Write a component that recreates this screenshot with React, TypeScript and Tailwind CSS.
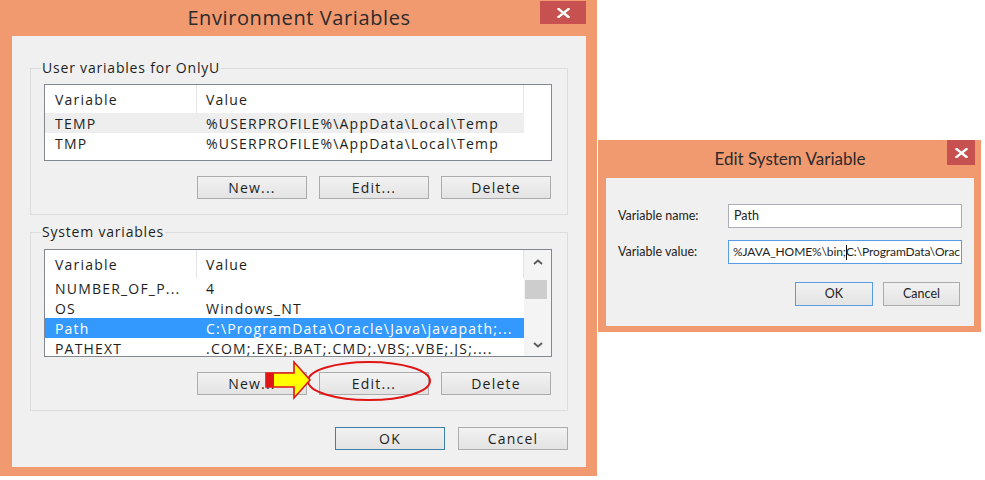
import type { ReactNode } from "react";

const MAIN_FONT = "font-['Open_Sans',sans-serif] text-[14px] tracking-[1.2px] text-[#1e1e1e]";
const SMALL_FONT = "font-['Lato',sans-serif] text-[12.5px] text-[#1e1e1e]";

function CloseButton({ className }: { className: string }) {
  return (
    <div className={`bg-[#c75050] flex items-center justify-center ${className}`}>
      <svg width="13" height="10" viewBox="0 0 13 10">
        <path d="M1.5 1 L11.5 9 M11.5 1 L1.5 9" stroke="#ffffff" strokeWidth="2.4" strokeLinecap="square" />
      </svg>
    </div>
  );
}

function WinButton({ children, className }: { children: ReactNode; className: string }) {
  return (
    <div
      className={`h-[23px] flex items-center justify-center border bg-gradient-to-b from-[#f2f2f2] to-[#e3e3e3] ${className}`}
    >
      {children}
    </div>
  );
}

function Chevron({ up }: { up?: boolean }) {
  return (
    <svg width="10" height="6" viewBox="0 0 10 6">
      <path d={up ? "M1 5 L5 1.5 L9 5" : "M1 1 L5 4.5 L9 1"} stroke="#5a5a5a" strokeWidth="1.8" fill="none" />
    </svg>
  );
}

type Row = { name: string; value: string; state?: "hover" | "selected" };

function ListView({ rows, scroll, height }: { rows: Row[]; scroll?: boolean; height: string }) {
  return (
    <div className={`border border-[#828790] bg-white flex overflow-hidden ${height}`}>
      <div className="w-[479px] shrink-0">
        <div className="h-[28px] flex">
          <div className="w-[152px] pl-[10px] flex items-center border-r border-[#e5e5e5]">Variable</div>
          <div className="flex-1 pl-[9px] flex items-center border-r border-[#e5e5e5]">Value</div>
        </div>
        {rows.map((r) => (
          <div
            key={r.name}
            className={`h-[20px] flex items-center whitespace-nowrap ${
              r.state === "selected"
                ? "bg-[#3399ff] text-white"
                : r.state === "hover"
                  ? "bg-[#eeeeee]"
                  : ""
            }`}
          >
            <div className="w-[152px] pl-[10px]">{r.name}</div>
            <div className="flex-1 pl-[9px]">{r.value}</div>
          </div>
        ))}
      </div>
      {scroll ? (
        <div className="flex-1 bg-[#f4f4f4] flex flex-col">
          <div className="h-[24px] flex items-center justify-center">
            <Chevron up />
          </div>
          <div className="mt-[6px] ml-[1px] w-[22px] h-[19px] bg-[#cdcdcd]" />
          <div className="flex-1" />
          <div className="h-[22px] flex items-center justify-center">
            <Chevron />
          </div>
        </div>
      ) : (
        <div className="flex-1" />
      )}
    </div>
  );
}

function ButtonRow() {
  return (
    <div className="mt-[15px] mr-[1px] flex justify-end gap-[12px]">
      <WinButton className="w-[110px] border-[#acacac]">New...</WinButton>
      <WinButton className="w-[110px] border-[#acacac]">Edit...</WinButton>
      <WinButton className="w-[110px] border-[#acacac]">Delete</WinButton>
    </div>
  );
}

function Group({ label, children, className }: { label: string; children: ReactNode; className: string }) {
  return (
    <div className={`mx-[18px] border border-[#dcdcdc] pl-[13px] pr-[15px] pb-[15px] ${className}`}>
      <div className="-mt-[10px] -ml-[3px] w-fit px-[1px] bg-[#f0f0f0] leading-[18px] tracking-[0.8px]">{label}</div>
      {children}
    </div>
  );
}

function EnvironmentVariables() {
  const userRows: Row[] = [
    { name: "TEMP", value: "%USERPROFILE%\\AppData\\Local\\Temp", state: "hover" },
    { name: "TMP", value: "%USERPROFILE%\\AppData\\Local\\Temp" },
  ];
  const systemRows: Row[] = [
    { name: "NUMBER_OF_P...", value: "4" },
    { name: "OS", value: "Windows_NT" },
    { name: "Path", value: "C:\\ProgramData\\Oracle\\Java\\javapath;...", state: "selected" },
    { name: "PATHEXT", value: ".COM;.EXE;.BAT;.CMD;.VBS;.VBE;.JS;...." },
  ];

  return (
    <div className="w-[597px] h-[476px] shrink-0 bg-[#f1996f] pl-[12px] pr-[11px] flex flex-col">
      <div className="h-[36px] grid grid-cols-[46px_1fr_46px]">
        <div />
        <div className="flex items-center justify-center pb-[1px] font-['Open_Sans',sans-serif] text-[20px] tracking-[0.6px] text-[#2b2b2b]">
          Environment Variables
        </div>
        <div className="pt-[1px]">
          <CloseButton className="h-[23px]" />
        </div>
      </div>
      <div className={`relative h-[431px] bg-[#f0f0f0] flex flex-col ${MAIN_FONT}`}>
        <Group label="User variables for OnlyU" className="mt-[32px]">
          <div className="mt-[7px]">
            <ListView rows={userRows} height="h-[77px]" />
          </div>
          <ButtonRow />
        </Group>
        <Group label="System variables" className="mt-[17px]">
          <div className="mt-[8px]">
            <ListView rows={systemRows} scroll height="h-[108px]" />
          </div>
          <div className="mt-[1px]">
            <ButtonRow />
          </div>
        </Group>
        <div className="mt-[16px] mr-[18px] flex justify-end gap-[13px]">
          <WinButton className="w-[110px] border-[#3c7fb1] from-[#eef4fa] to-[#e1ebf5]">OK</WinButton>
          <WinButton className="w-[110px] border-[#acacac]">Cancel</WinButton>
        </div>

        {/* annotation drawn over the Edit... button */}
        <svg
          className="absolute left-[250px] top-[322px] pointer-events-none"
          width="172"
          height="46"
          viewBox="0 0 172 46"
        >
          <ellipse cx="107" cy="23" rx="61" ry="19" fill="none" stroke="#e01515" strokeWidth="2" />
          <polygon
            points="4,15 32,15 32,4 48,22 32,40 32,29 4,29"
            fill="#ffff00"
            stroke="#e01515"
            strokeWidth="1.6"
            strokeLinejoin="miter"
          />
          <rect x="4" y="15" width="8" height="14" fill="#e01515" />
        </svg>
      </div>
    </div>
  );
}

function EditSystemVariable() {
  return (
    <div className="mt-[140px] ml-[1px] w-[383px] h-[192px] shrink-0 bg-[#f1996f] pl-[8px] pr-[7px] flex flex-col">
      <div className="h-[38px] grid grid-cols-[27px_1fr_27px]">
        <div />
        <div className="flex items-center justify-center font-['Lato',sans-serif] text-[17px] text-[#2b2b2b]">
          Edit System Variable
        </div>
        <div className="-mr-[1px]">
          <CloseButton className="h-[25px]" />
        </div>
      </div>
      <div className={`h-[148px] bg-[#f0f0f0] px-[12px] pt-[26px] ${SMALL_FONT}`}>
        <div className="flex items-center">
          <div className="w-[110px]">Variable name:</div>
          <div className="flex-1 h-[24px] border border-[#abadb3] bg-white pl-[5px] flex items-center">Path</div>
        </div>
        <div className="mt-[12px] flex items-center">
          <div className="w-[110px]">Variable value:</div>
          <div className="flex-1 h-[24px] border border-[#569de5] bg-white pl-[4px] flex items-center whitespace-nowrap overflow-hidden text-[12px] tracking-[-0.1px]">
            %JAVA_HOME%\bin;
            <span className="inline-block w-px h-[15px] bg-black -mr-[1px]" />
            C:\ProgramData\Orac
          </div>
        </div>
        <div className="mt-[18px] mr-[2px] flex justify-end gap-[10px]">
          <WinButton className="!h-[24px] w-[78px] border-[#569de5] from-[#eef4fa] to-[#e1ebf5]">OK</WinButton>
          <WinButton className="!h-[24px] w-[77px] border-[#acacac]">Cancel</WinButton>
        </div>
      </div>
    </div>
  );
}

export default function App() {
  return (
    <div className="w-[985px] h-[480px] bg-white flex items-start">
      <EnvironmentVariables />
      <EditSystemVariable />
    </div>
  );
}
